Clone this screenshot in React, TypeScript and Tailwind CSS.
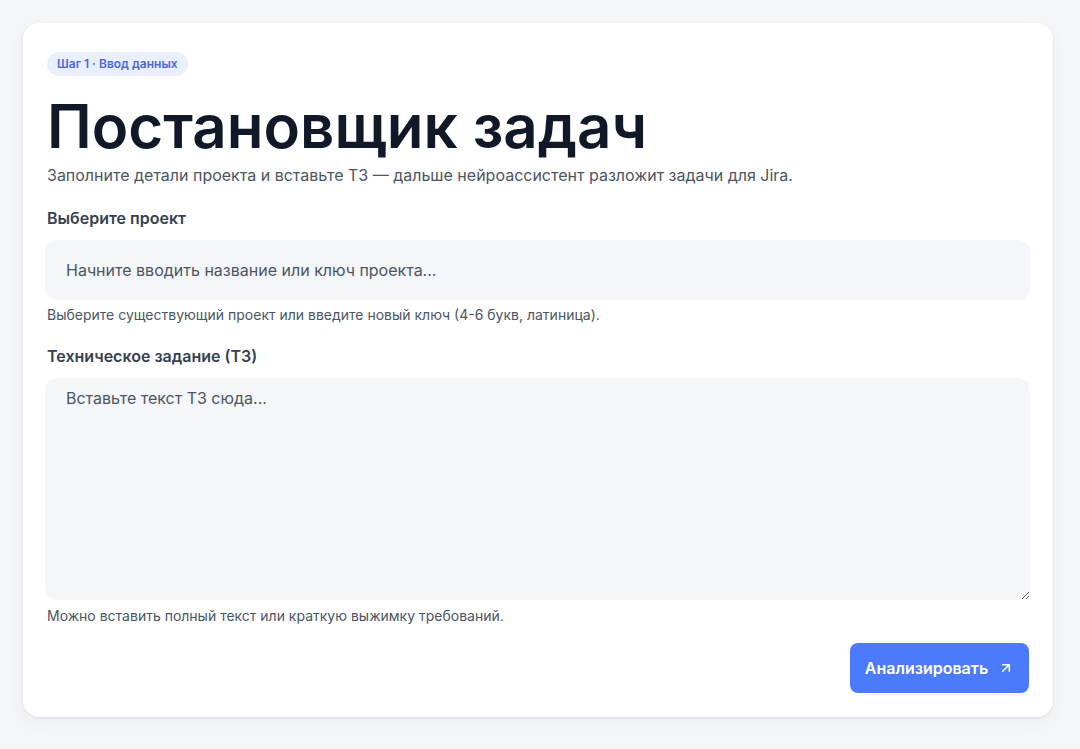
import { ArrowUpRight } from 'lucide-react';

const App = () => {
  return (
    <div className="min-h-screen bg-[#f4f6f9] p-[23px] font-['Inter',sans-serif]">
      <div className="w-[1030px] rounded-2xl bg-white px-6 pt-[27px] pb-6 shadow-[0_1px_3px_rgba(15,23,42,0.08),0_6px_20px_rgba(15,23,42,0.04)]">
        <span className="inline-block rounded-full bg-[#e9effd] px-2.5 py-1 text-xs leading-4 font-semibold text-[#4a66d8]">
          Шаг 1 · Ввод данных
        </span>

        <h1 className="mt-[17px] text-6xl leading-[1.1] font-semibold text-[#111827]">
          Постановщик задач
        </h1>
        <p className="mt-1 text-base leading-6 text-[#4b5563]">
          Заполните детали проекта и вставьте ТЗ — дальше нейроассистент разложит задачи для Jira.
        </p>

        <label className="mt-[19px] block text-base leading-6 font-semibold text-[#374151]">
          Выберите проект
        </label>
        <input
          type="text"
          placeholder="Начните вводить название или ключ проекта..."
          className="mt-[10px] block h-[60px] w-[985px] -ml-0.5 rounded-xl bg-[#f5f6f9] px-[21px] text-base text-[#374151] outline-none placeholder:text-[#4b5563]"
        />
        <p className="mt-[5px] text-sm leading-5 text-[#4b5563]">
          Выберите существующий проект или введите новый ключ (4-6 букв, латиница).
        </p>

        <label className="mt-[19px] block text-base leading-6 font-semibold text-[#374151]">
          Техническое задание (ТЗ)
        </label>
        <textarea
          placeholder="Вставьте текст ТЗ сюда..."
          className="mt-[10px] block h-[222px] w-[985px] -ml-0.5 rounded-xl bg-[#f5f6f9] px-[21px] py-2 text-base leading-6 text-[#374151] outline-none placeholder:text-[#4b5563]"
        />
        <p className="mt-1.5 text-sm leading-5 text-[#4b5563]">
          Можно вставить полный текст или краткую выжимку требований.
        </p>

        <div className="mt-[17px] flex justify-end">
          <button className="flex h-[50px] w-[179px] items-center justify-center gap-2.5 rounded-lg bg-[#4b7bfb] text-base font-semibold text-white">
            Анализировать
            <ArrowUpRight className="h-4 w-4" strokeWidth={2.25} />
          </button>
        </div>
      </div>
    </div>
  );
};

export default App;
